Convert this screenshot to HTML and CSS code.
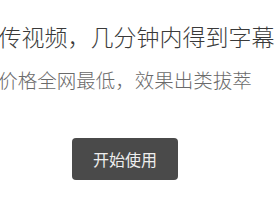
FILE: index.html
```html
<!DOCTYPE html>
<html lang="zh-CN">
<head>
  <meta charset="UTF-8" />
  <meta name="viewport" content="width=device-width, initial-scale=1.0"/>
  <title>上传视频</title>
  <link rel="stylesheet" href="styles.css">
</head>
<body>

<!-- Главный блок -->
<div class="hero">
  <h1 class="hero-title">上传视频，几分钟内得到字幕</h1>
  <p class="hero-sub">价格全网最低，效果出类拔萃</p>
  <a href="#" class="start-btn">开始使用</a>
</div>

</body>
</html>
```

FILE: styles.css
```css
* {
  margin: 0;
  padding: 0;
  box-sizing: border-box;
}

body {
  font-family: "Noto Sans CJK SC", sans-serif;
  background-color: #ffffff;
  overflow: hidden;
}

.hero {
  width: 250px;
  padding-top: 22px;
  display: flex;
  flex-direction: column;
  align-items: center;
  white-space: nowrap;
}

.hero-title {
  font-size: 23px;
  font-weight: 300;
  line-height: 28px;
  color: #3a3a3a;
}

.hero-sub {
  margin-top: 17px;
  font-size: 19.5px;
  font-weight: 300;
  line-height: 26px;
  color: #6a6a6a;
}

.start-btn {
  margin-top: 45px;
  width: 106px;
  height: 42px;
  display: flex;
  align-items: center;
  justify-content: center;
  background-color: #4a4a4a;
  border-radius: 4px;
  color: #eeeeee;
  font-size: 16px;
  text-decoration: none;
}
```
